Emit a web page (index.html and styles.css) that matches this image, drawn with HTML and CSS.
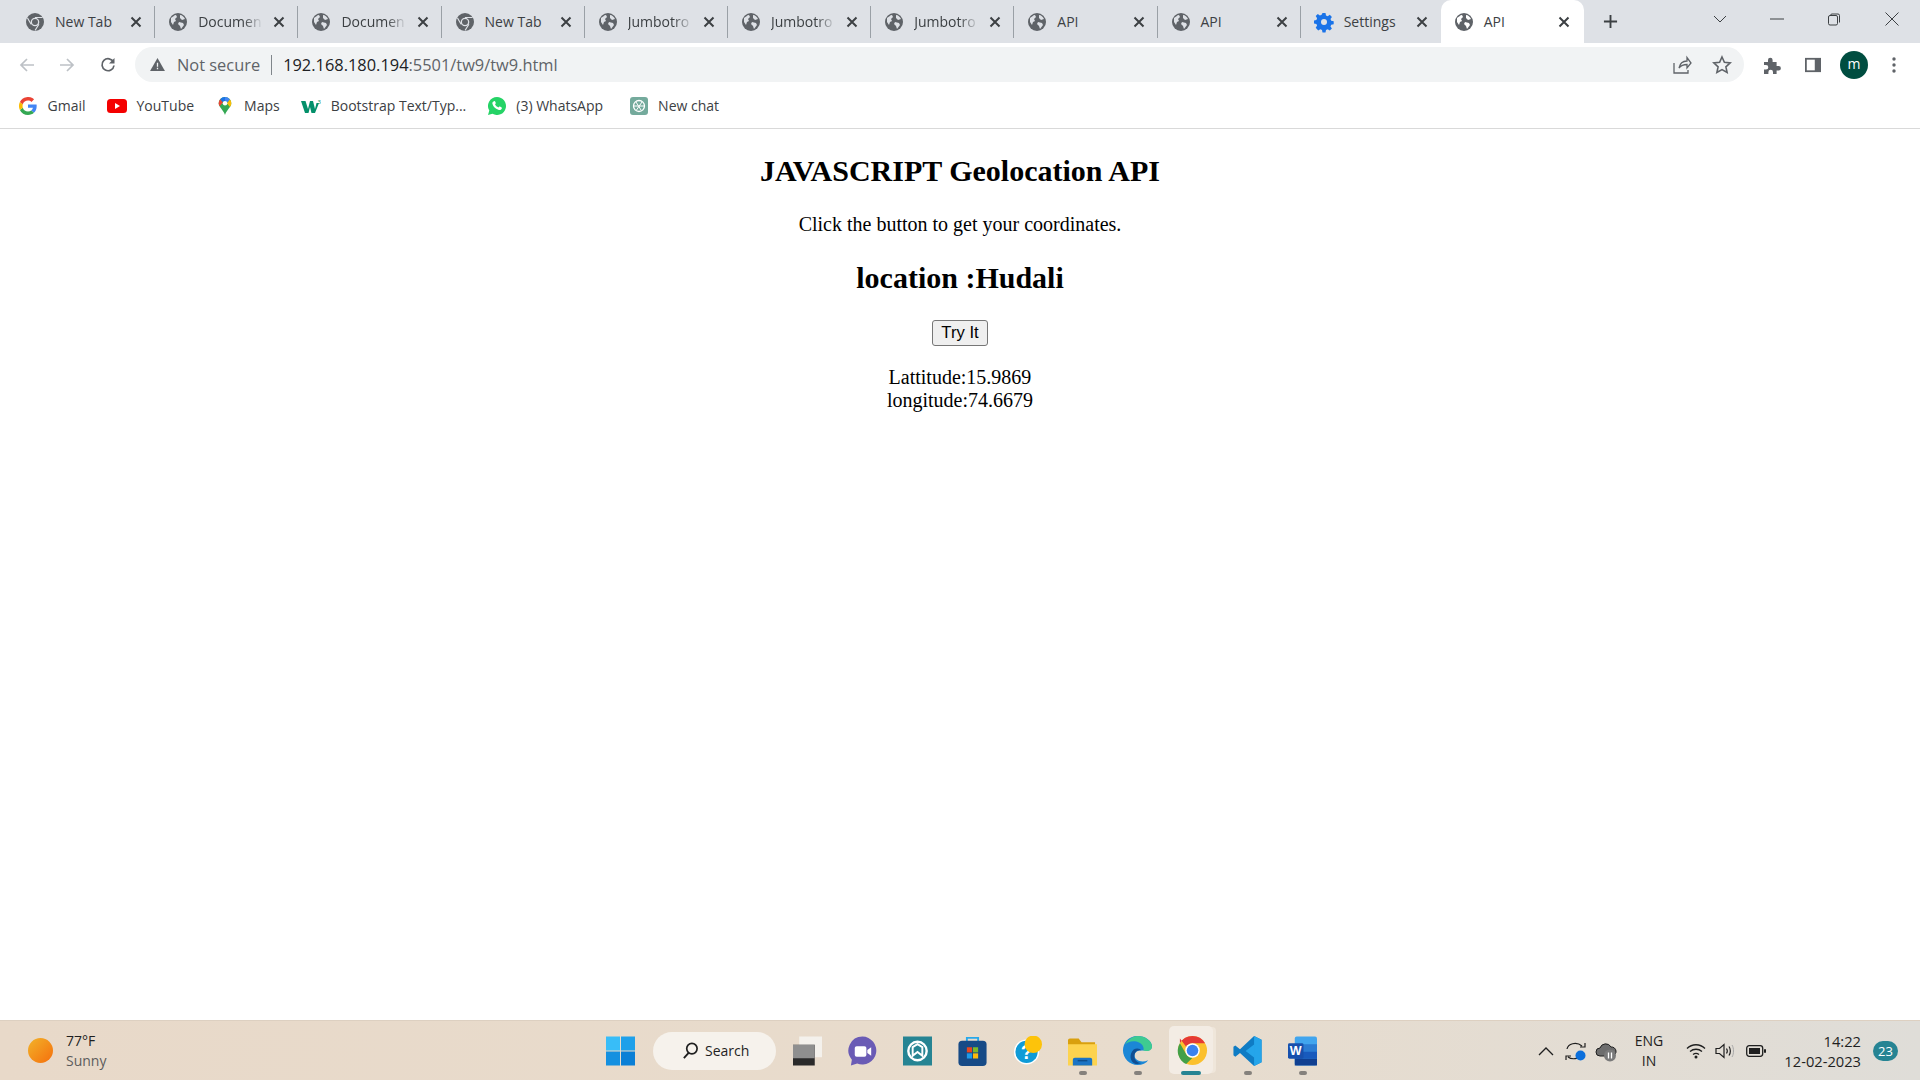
FILE: index.html
```html
<!DOCTYPE html>
<html lang="en">
<head>
  <meta charset="UTF-8" />
  <title>API</title>
  <link rel="stylesheet" href="styles.css">
</head>
<body>
  <svg class="sprites">
    <symbol id="globe" viewBox="0 0 18 18">
      <circle cx="9" cy="9" r="9" fill="#5f6368"/>
      <path d="M2 5c2-1 3-3 5-3l1 2-2 2 1 2-2 1-1 3-2-3zM11 2c2 0 4 2 5 4l-3 1-2-2zM10 9l4 1 1 2-3 4-1-3-2-2z" fill="#dee1e6"/>
    </symbol>
    <symbol id="globe-light" viewBox="0 0 18 18">
      <circle cx="9" cy="9" r="9" fill="#5f6368"/>
      <path d="M2 5c2-1 3-3 5-3l1 2-2 2 1 2-2 1-1 3-2-3zM11 2c2 0 4 2 5 4l-3 1-2-2zM10 9l4 1 1 2-3 4-1-3-2-2z" fill="#fff"/>
    </symbol>
    <symbol id="chrome-mono" viewBox="0 0 18 18">
      <circle cx="9" cy="9" r="9" fill="#5f6368"/>
      <path d="M9 4.500h7.500M5.100 11.200 1.500 5M12.900 11.200 9 17.500" stroke="#dee1e6" stroke-width="1.200"/>
      <circle cx="9" cy="9" r="4.300" fill="#dee1e6"/>
      <circle cx="9" cy="9" r="3" fill="#5f6368"/>
    </symbol>
    <symbol id="close" viewBox="0 0 16 16">
      <path d="M3.500 3.500l9 9M12.500 3.500l-9 9" stroke="#3c4043" stroke-width="2" fill="none"/>
    </symbol>
    <symbol id="colour-chrome" viewBox="0 0 32 32">
      <circle cx="16" cy="16" r="15" fill="#fbc02d"/>
      <path d="M16 1a15 15 0 0 1 13 7.500H16a7.500 7.500 0 0 0-6.500 3.750L3 3.500 3 8.500A15 15 0 0 1 16 1z" fill="#e53935"/>
      <path d="M3 8.500l6.500 11.250a7.500 7.500 0 0 0 6.500 3.750L9.500 30A15 15 0 0 1 3 8.500z" fill="#43a047"/>
      <circle cx="16" cy="16" r="7.500" fill="#fff"/>
      <circle cx="16" cy="16" r="6" fill="#3b82f0"/>
    </symbol>
  </svg>

  <header class="browser">
    <div class="tabstrip">
      <div class="tab"><svg class="favicon"><use href="#chrome-mono"/></svg><span class="tab-title">New Tab</span><svg class="tab-close"><use href="#close"/></svg></div>
      <div class="tab"><svg class="favicon"><use href="#globe"/></svg><span class="tab-title tab-fade">Documen</span><svg class="tab-close"><use href="#close"/></svg></div>
      <div class="tab"><svg class="favicon"><use href="#globe"/></svg><span class="tab-title tab-fade">Documen</span><svg class="tab-close"><use href="#close"/></svg></div>
      <div class="tab"><svg class="favicon"><use href="#chrome-mono"/></svg><span class="tab-title">New Tab</span><svg class="tab-close"><use href="#close"/></svg></div>
      <div class="tab"><svg class="favicon"><use href="#globe"/></svg><span class="tab-title tab-fade">Jumbotro</span><svg class="tab-close"><use href="#close"/></svg></div>
      <div class="tab"><svg class="favicon"><use href="#globe"/></svg><span class="tab-title tab-fade">Jumbotro</span><svg class="tab-close"><use href="#close"/></svg></div>
      <div class="tab"><svg class="favicon"><use href="#globe"/></svg><span class="tab-title tab-fade">Jumbotro</span><svg class="tab-close"><use href="#close"/></svg></div>
      <div class="tab"><svg class="favicon"><use href="#globe"/></svg><span class="tab-title">API</span><svg class="tab-close"><use href="#close"/></svg></div>
      <div class="tab"><svg class="favicon"><use href="#globe"/></svg><span class="tab-title">API</span><svg class="tab-close"><use href="#close"/></svg></div>
      <div class="tab tab-last">
        <svg class="favicon" viewBox="0 0 18 18"><path d="M7.500 0h3l.5 2.500 1.700.7 2.100-1.400 2.100 2.100-1.400 2.100.7 1.700 2.500.5v3l-2.500.5-.7 1.700 1.400 2.100-2.100 2.100-2.100-1.400-1.700.7-.5 2.500h-3l-.5-2.500-1.700-.7-2.100 1.400L.7 14.700l1.400-2.100-.7-1.700L-1 10.400v-3l2.400-.5.7-1.700L.7 3.100l2.100-2.100 2.100 1.400 1.700-.7z" fill="#1a73e8"/><circle cx="9" cy="9" r="3" fill="#dee1e6"/></svg>
        <span class="tab-title">Settings</span><svg class="tab-close"><use href="#close"/></svg>
      </div>
      <div class="tab tab-active"><svg class="favicon"><use href="#globe-light"/></svg><span class="tab-title">API</span><svg class="tab-close"><use href="#close"/></svg></div>
      <svg class="new-tab" viewBox="0 0 16 16"><path d="M8 1v14M1 8h14" stroke="#3c4043" stroke-width="2"/></svg>
      <div class="window-controls">
        <svg class="win-chevron" viewBox="0 0 14 8"><path d="M1 1l6 6 6-6" stroke="#3c4043" fill="none"/></svg>
        <svg class="win-min" viewBox="0 0 14 2"><path d="M0 1h14" stroke="#3c4043"/></svg>
        <svg class="win-restore" viewBox="0 0 14 14"><path d="M3.500 3.500a1.500 1.500 0 0 1 1.500-1.500h6a1.500 1.500 0 0 1 1.500 1.500v7M1.500 5a1.500 1.500 0 0 1 1.500-1.500h6a1.500 1.500 0 0 1 1.500 1.500v6.500a1.500 1.500 0 0 1-1.500 1.500h-6a1.500 1.500 0 0 1-1.500-1.500z" stroke="#3c4043" fill="#dee1e6"/></svg>
        <svg class="win-close" viewBox="0 0 14 14"><path d="M.5.500l13 13M13.500.500l-13 13" stroke="#3c4043" fill="none"/></svg>
      </div>
    </div>

    <div class="toolbar">
      <svg class="nav-icon" viewBox="0 0 16 16"><path d="M15 8H2M8 2 2 8l6 6" stroke="#bdc1c6" stroke-width="1.700" fill="none"/></svg>
      <svg class="nav-icon" viewBox="0 0 16 16"><path d="M1 8h13M8 2l6 6-6 6" stroke="#bdc1c6" stroke-width="1.700" fill="none"/></svg>
      <svg class="nav-icon" viewBox="0 0 16 16"><path d="M13.500 5.200A6 6 0 1 0 14 8.500" stroke="#5f6368" stroke-width="1.700" fill="none"/><path d="M14.500 1v5.500H9z" fill="#5f6368"/></svg>
      <div class="omnibox">
        <svg class="warn-icon" viewBox="0 0 16 14"><path d="M8 0l8 14H0z" fill="#5f6368"/><path d="M8 5v4.500M8 10.500v1.500" stroke="#f1f3f4" stroke-width="1.400"/></svg>
        <span class="not-secure">Not secure</span>
        <span class="omni-sep"></span>
        <span class="url"><span class="url-host">192.168.180.194</span>:5501/tw9/tw9.html</span>
        <svg class="omni-icon omni-share" viewBox="0 0 20 20"><path d="M2 8v10h14v-3M7 13c1-5 4-7 8-7V2.500l4 5.500-4 5V9.500c-3 0-6 1-8 3.500z" stroke="#5f6368" stroke-width="1.300" fill="none"/></svg>
        <svg class="omni-icon" viewBox="0 0 20 20"><path d="M10 2l2.400 5.300 5.800.6-4.300 3.900 1.200 5.700-5.100-2.900-5.100 2.900 1.200-5.700L1.800 7.900l5.800-.6z" stroke="#5f6368" stroke-width="1.600" fill="none"/></svg>
      </div>
      <svg class="bar-icon bar-puzzle" viewBox="0 0 18 18"><path d="M1 6h4V4a2.300 2.300 0 0 1 4.600 0v2h4v4h2a2.300 2.300 0 0 1 0 4.600h-2V18H10v-2a2.300 2.300 0 0 0-4.600 0v2H1v-4.500h2a2.300 2.300 0 0 0 0-4.600H1z" fill="#5f6368"/></svg>
      <svg class="bar-icon bar-panel" viewBox="0 0 18 18"><path d="M0 1h18v16H0z" fill="#5f6368"/><path d="M2 3h9v12H2z" fill="#fff"/></svg>
      <div class="avatar">m</div>
      <svg class="bar-icon bar-dots" viewBox="0 0 4 16"><circle cx="2" cy="2" r="1.700" fill="#5f6368"/><circle cx="2" cy="8" r="1.700" fill="#5f6368"/><circle cx="2" cy="14" r="1.700" fill="#5f6368"/></svg>
    </div>

    <div class="bookmarks">
      <div class="bookmark">
        <svg class="mark" viewBox="0 0 16 16"><path d="M15.700 8.200c0-.6 0-1.100-.1-1.600H8v3h4.400a3.700 3.700 0 0 1-1.600 2.500l2.500 2c1.500-1.400 2.400-3.400 2.400-5.900z" fill="#4285f4"/><path d="M8 16c2.200 0 4-.7 5.300-1.900l-2.500-2c-.7.500-1.600.8-2.800.8a4.900 4.900 0 0 1-4.600-3.400L.8 11.500A8 8 0 0 0 8 16z" fill="#34a853"/><path d="M3.400 9.500a4.800 4.800 0 0 1 0-3L.8 4.500a8 8 0 0 0 0 7z" fill="#fbbc05"/><path d="M8 3.200c1.200 0 2.300.4 3.100 1.200l2.300-2.300A8 8 0 0 0 .8 4.500l2.600 2A4.900 4.900 0 0 1 8 3.200z" fill="#ea4335"/></svg>
        Gmail
      </div>
      <div class="bookmark">
        <svg class="mark mark-wide" viewBox="0 0 20 14"><rect width="20" height="14" rx="3.500" fill="#f40000"/><path d="M8 4l5 3-5 3z" fill="#fff"/></svg>
        YouTube
      </div>
      <div class="bookmark">
        <svg class="mark" viewBox="0 0 16 20"><path d="M8 0a7 7 0 0 0-7 7c0 4.500 5 7 7 13 2-6 7-8.500 7-13a7 7 0 0 0-7-7z" fill="#34a853"/><path d="M8 0a7 7 0 0 1 5.500 2.700L10 7a2.500 2.500 0 0 0-2-2.500z" fill="#4285f4"/><path d="M2.600 2.500A7 7 0 0 1 8 0v4.500A2.500 2.500 0 0 0 5.700 6z" fill="#1a73e8"/><path d="M1 7a7 7 0 0 1 1.600-4.500L5.700 6 2 10.200A7 7 0 0 1 1 7z" fill="#ea4335"/><path d="M13.500 2.700A7 7 0 0 1 15 7c0 1.500-.6 2.800-1.500 4L10 7z" fill="#fbbc05"/><circle cx="8" cy="7" r="2.500" fill="#fff"/></svg>
        Maps
      </div>
      <div class="bookmark">
        <svg class="mark mark-wide" viewBox="0 0 20 14"><path d="M0 2h4.500l2.500 8 2-8h3l2 8 1.500-6 2.500 0L14 14h-3.500L9 8l-1.500 6H4z" fill="#04906a"/><text x="16.500" y="5" class="mark-sup">3</text></svg>
        Bootstrap Text/Typ...
      </div>
      <div class="bookmark">
        <svg class="mark" viewBox="0 0 18 18"><path d="M9 0a9 9 0 0 0-7.700 13.600L0 18l4.500-1.200A9 9 0 1 0 9 0z" fill="#25d366"/><path d="M5.500 4.500c1-1 1.500-.5 2 .7.400.8.400 1 0 1.500l-.5.600c.7 1.500 1.800 2.500 3.400 3.200l.7-.8c.4-.4.700-.4 1.300 0 1.500.8 1.800 1 1.300 2-.6 1.200-2 1.500-3.400 1-3-1-5-3-5.800-5.700-.3-1-.2-1.800 1-2.500z" fill="#fff"/></svg>
        (3) WhatsApp
      </div>
      <div class="bookmark bookmark-last">
        <svg class="mark" viewBox="0 0 18 18"><rect width="18" height="18" rx="3" fill="#74aa9c"/><circle cx="9" cy="9" r="5.500" stroke="#fff" stroke-width="1.300" fill="none"/><path d="M6 5l5 8M12 5 6.500 13M4 9h10" stroke="#fff"/></svg>
        New chat
      </div>
    </div>
  </header>

  <main class="page">
    <h2>JAVASCRIPT Geolocation API</h2>
    <p>Click the button to get your coordinates.</p>
    <h2>location :Hudali</h2>
    <button type="button">Try It</button>
    <p class="coords">Lattitude:15.9869<br>longitude:74.6679</p>
  </main>

  <footer class="taskbar">
    <div class="weather">
      <div class="sun"></div>
      <div class="weather-text">
        <div>77°F</div>
        <div class="weather-sub">Sunny</div>
      </div>
    </div>

    <div class="task-apps">
      <div class="task-slot">
        <svg class="app-icon" viewBox="0 0 29 29"><rect width="14" height="14" fill="#38bdf8"/><rect x="15" width="14" height="14" fill="#1ea0ea"/><rect y="15" width="14" height="14" fill="#1490e0"/><rect x="15" y="15" width="14" height="14" fill="#0a7fd6"/></svg>
      </div>
      <div class="search-pill">
        <svg class="search-icon" viewBox="0 0 18 18"><circle cx="10.500" cy="7" r="5.500" stroke="#1f1f1f" stroke-width="1.800" fill="none"/><path d="M7 11.500 2 17" stroke="#1f1f1f" stroke-width="2"/></svg>
        Search
      </div>
      <div class="task-slot">
        <svg class="app-icon" viewBox="0 0 28 28"><rect x="6" y="0" width="22" height="20" fill="#f4f1ec"/><rect x="0" y="8" width="21" height="20" fill="#2a2a2a"/><rect x="0" y="8" width="21" height="13" fill="#8f8f8f"/></svg>
      </div>
      <div class="task-slot">
        <svg class="app-icon" viewBox="0 0 30 30"><path d="M15 0a14.500 14.500 0 1 1-5.500 28L3 30l1-6A14.500 14.500 0 0 1 15 0z" fill="#6a5bb5"/><rect x="7" y="10" width="12" height="11" rx="2" fill="#fff"/><path d="M20 14l4-3v9l-4-3z" fill="#fff"/></svg>
      </div>
      <div class="task-slot">
        <svg class="app-icon" viewBox="0 0 30 30"><rect width="30" height="30" fill="#268493"/><circle cx="15" cy="15" r="9.500" stroke="#fff" stroke-width="2.500" fill="none"/><path d="M10 20V11l5-3 5 3v9l-5-4z" stroke="#fff" stroke-width="2" fill="none"/></svg>
      </div>
      <div class="task-slot">
        <svg class="app-icon" viewBox="0 0 30 32"><path d="M9 6V2h12v4" stroke="#28a8ea" stroke-width="2" fill="none"/><rect y="5" width="30" height="27" rx="4" fill="#164a86"/><rect x="9" y="12" width="5.500" height="5.500" fill="#e8461f"/><rect x="15.500" y="12" width="5.500" height="5.500" fill="#7cb928"/><rect x="9" y="18.500" width="5.500" height="5.500" fill="#1d9be9"/><rect x="15.500" y="18.500" width="5.500" height="5.500" fill="#fbb90a"/></svg>
      </div>
      <div class="task-slot">
        <svg class="app-icon" viewBox="0 0 30 30"><circle cx="14" cy="16" r="13" fill="#fff"/><circle cx="14" cy="16" r="11.500" fill="#0f9bd7"/><text x="14" y="23" class="help-mark">?</text><circle cx="21" cy="8" r="9" fill="#fdc30a"/></svg>
      </div>
      <div class="task-slot task-open">
        <svg class="app-icon" viewBox="0 0 30 30"><path d="M0 4a2 2 0 0 1 2-2h9l3 4h14v22H0z" fill="#d9a00e"/><path d="M0 8h30v22H0z" fill="#fdd34e"/><path d="M5 30v-6a2 2 0 0 1 2-2h16a2 2 0 0 1 2 2v6z" fill="#1b74c4"/><path d="M10 25h10" stroke="#0f4e8c" stroke-width="1.500"/></svg>
      </div>
      <div class="task-slot task-open">
        <svg class="app-icon app-large" viewBox="0 0 32 32"><path d="M16 1C7 1 1 8 1 16c0 8 7 15 15 15 5 0 9-2 11-5-6 3-14 1-14-5 0-3 3-5 6-5 5 0 11 1 12-4C31 6 24 1 16 1z" fill="#1b87d6"/><path d="M3 10C6 4 12 1 16 1c8 0 15 5 15 11 0 5-7 5-9 4 1-2 0-6-4-8-6-3-12-1-15 2z" fill="#3ecb91"/><path d="M14 30C8 28 7 20 12 15c3-2 7-1 8 1-5-1-8 3-7 8 1 3 4 5 7 5-2 1-4 1-6 1z" fill="#114e92"/></svg>
      </div>
      <div class="task-slot task-active">
        <svg class="app-icon app-large"><use href="#colour-chrome"/></svg>
      </div>
      <div class="task-slot task-open">
        <svg class="app-icon" viewBox="0 0 30 32"><path d="M22 0l8 4v24l-8 4L7 18l-5 4-2-1.500V11.500L2 10l5 4z" fill="#0f7cc4"/><path d="M22 0l8 4v24l-8 4zM22 9l-9 7 9 7z" fill="#25a5ea" fill-rule="evenodd"/></svg>
      </div>
      <div class="task-slot task-open">
        <svg class="app-icon" viewBox="0 0 30 30"><rect x="7" width="23" height="30" rx="2" fill="#41a5ee"/><rect x="7" y="8" width="23" height="7.500" fill="#2b7cd3"/><rect x="7" y="15.500" width="23" height="7.500" fill="#185abd"/><rect x="7" y="23" width="23" height="7" fill="#103f91"/><rect y="7" width="16" height="16" rx="1.500" fill="#1750ad"/><text x="8" y="19" class="word-mark">W</text></svg>
      </div>
    </div>

    <div class="tray">
      <svg class="tray-icon tray-chevron" viewBox="0 0 16 10"><path d="M1 9l7-7 7 7" stroke="#1f1f1f" stroke-width="1.300" fill="none"/></svg>
      <svg class="tray-icon tray-sync" viewBox="0 0 22 22"><path d="M2 9c1-5 9-8 15-3M20 3v4h-5M16 15c-2 4-9 5-13 2M1 20v-4h5" stroke="#1f1f1f" stroke-width="1.200" fill="none"/><circle cx="15.500" cy="15.500" r="5" fill="#0b6fdc"/></svg>
      <svg class="tray-icon tray-cloud" viewBox="0 0 22 22"><path d="M5 16a4 4 0 0 1 0-8 6 6 0 0 1 11-1 4.500 4.500 0 0 1 1 9z" fill="#6d6d6d" stroke="#1f1f1f"/><circle cx="15" cy="15.500" r="6" fill="#7a7a7a"/><path d="M13.500 12.500v6M16.500 12.500v6" stroke="#fff" stroke-width="1.300"/></svg>
      <div class="lang">ENG<br>IN</div>
      <svg class="tray-icon tray-wifi" viewBox="0 0 20 16"><path d="M1 5.500c5-5 13-5 18 0M4 8.500c3.500-3 8.500-3 12 0M7 11.500c2-1.500 4-1.500 6 0" stroke="#1f1f1f" stroke-width="1.300" fill="none"/><circle cx="10" cy="14" r="1.500" fill="#1f1f1f"/></svg>
      <svg class="tray-icon tray-sound" viewBox="0 0 20 16"><path d="M1 5.500h3.500L9 1.500v13l-4.500-4H1z" stroke="#1f1f1f" stroke-width="1.200" fill="none"/><path d="M11.500 5.500c1 1.500 1 3.500 0 5M14 3.500c1.800 2.500 1.800 6.500 0 9" stroke="#1f1f1f" stroke-width="1.200" fill="none"/><path d="M17 2c2 3 2 9 0 12" stroke="#a8a8a8" fill="none"/></svg>
      <svg class="tray-icon tray-battery" viewBox="0 0 20 12"><rect x=".7" y=".7" width="16" height="10.600" rx="2.500" stroke="#1f1f1f" stroke-width="1.300" fill="none"/><rect x="3" y="3" width="11" height="6" fill="#1f1f1f"/><rect x="18" y="4" width="2" height="4" rx="1" fill="#1f1f1f"/></svg>
      <div class="clock">14:22<br>12-02-2023</div>
      <div class="notif">23</div>
    </div>
  </footer>
</body>
</html>
```

FILE: styles.css
```css
* {
  box-sizing: border-box;
}

html,
body {
  height: 100%;
}

body {
  margin: 0;
  display: flex;
  flex-direction: column;
  height: 1080px;
  overflow: hidden;
  background: #fff;
  color: #000;
  font-family: 'Liberation Serif', serif;
}

.sprites {
  display: none;
}

/* Browser frame */
.browser {
  font-family: 'Open Sans', sans-serif;
  color: #3c4043;
  border-bottom: 1px solid #d9d9d9;
}

.tabstrip {
  display: flex;
  align-items: center;
  height: 43px;
  padding-left: 12px;
  background: #dee1e6;
}

.tab {
  display: flex;
  align-items: center;
  flex: none;
  width: 143.2px;
  height: 32px;
  padding: 0 10px 0 14px;
  border-right: 1px solid #9aa0a6;
  font-size: 14px;
}

.tab-last {
  width: 140px;
  padding-right: 11px;
  border-right: none;
}

.tab-active {
  width: 143px;
  height: 43px;
  padding-right: 12px;
  background: #fff;
  border: none;
  border-radius: 10px 10px 0 0;
}

.favicon {
  flex: none;
  width: 18px;
  height: 18px;
  overflow: visible;
}

.tab-title {
  flex: 1;
  min-width: 0;
  margin: 0 8px 0 11px;
  white-space: nowrap;
}

/* long titles fade out before the close button */
.tab-fade {
  -webkit-mask-image: linear-gradient(to right, #000 70%, transparent 100%);
  mask-image: linear-gradient(to right, #000 70%, transparent 100%);
}

.tab-close {
  flex: none;
  width: 16px;
  height: 16px;
}

.new-tab {
  flex: none;
  width: 15px;
  height: 15px;
  margin-left: 19px;
}

.window-controls {
  display: flex;
  align-items: center;
  margin-left: 95px;
  margin-bottom: 5px;
}

.win-chevron {
  width: 14px;
  height: 8px;
}

.win-min {
  width: 14px;
  height: 2px;
  margin-left: 43px;
}

.win-restore {
  width: 14px;
  height: 14px;
  margin-left: 43px;
}

.win-close {
  width: 14px;
  height: 14px;
  margin-left: 44px;
}

.toolbar {
  display: flex;
  align-items: center;
  height: 43px;
  padding: 0 0 0 19px;
  background: #fff;
}

.nav-icon {
  flex: none;
  width: 16px;
  height: 16px;
  margin-right: 24px;
}

.nav-icon:nth-child(2) {
  margin-right: 25px;
}

.nav-icon:nth-child(3) {
  margin-right: 19px;
}

.omnibox {
  display: flex;
  align-items: center;
  flex: none;
  width: 1609px;
  height: 35px;
  padding: 0 12px 0 15px;
  background: #f1f3f4;
  border-radius: 18px;
  font-size: 16.4px;
  color: #5f6368;
}

.warn-icon {
  flex: none;
  width: 15px;
  height: 13px;
}

.not-secure {
  margin-left: 12px;
}

.omni-sep {
  width: 1px;
  height: 20px;
  margin: 0 11px;
  background: #80868b;
}

.url {
  flex: 1;
}

.url-host {
  color: #202124;
}

.omni-icon {
  flex: none;
  width: 20px;
  height: 20px;
  margin-left: 20px;
}

.omni-share {
  margin-left: 0;
}

.bar-icon {
  flex: none;
}

.bar-puzzle {
  width: 18px;
  height: 18px;
  margin-left: 19px;
}

.bar-panel {
  width: 18px;
  height: 16px;
  margin-left: 23px;
}

.avatar {
  flex: none;
  display: flex;
  align-items: center;
  justify-content: center;
  width: 28px;
  height: 28px;
  margin-left: 18px;
  padding-bottom: 3px;
  border-radius: 50%;
  background: #004d40;
  color: #fff;
  font-size: 14px;
}

.bar-dots {
  width: 4px;
  height: 16px;
  margin-left: 24px;
}

.bookmarks {
  display: flex;
  align-items: center;
  height: 42px;
  padding: 0 0 3px 19px;
  gap: 21.5px;
  background: #fff;
  font-size: 14px;
}

.bookmark {
  display: flex;
  align-items: center;
  gap: 10.5px;
  white-space: nowrap;
}

.bookmark-last {
  margin-left: 5px;
}

.mark {
  flex: none;
  width: 18px;
  height: 18px;
}

.mark-wide {
  width: 20px;
  height: 14px;
  margin-right: -1px;
}

.mark-sup {
  font-family: 'Open Sans', sans-serif;
  font-size: 6px;
  fill: #04906a;
}

/* Page content */
.page {
  flex: 1;
  text-align: center;
  font-size: 20px;
}

.page h2 {
  margin: 25px 0;
  font-size: 30px;
  line-height: 34px;
}

.page p {
  margin: 25px 0;
  line-height: 23px;
}

.page button {
  display: block;
  width: 56px;
  height: 26px;
  margin: 0 auto;
  padding: 0;
  background: #efefef;
  border: 1px solid #767676;
  border-radius: 3px;
  font-family: 'Liberation Sans', sans-serif;
  font-size: 16.67px;
  color: #000;
}

.page .coords {
  margin-top: 20px;
}

/* Windows taskbar */
.taskbar {
  position: relative;
  display: flex;
  align-items: center;
  flex: none;
  height: 60px;
  padding-left: 28px;
  background: linear-gradient(to right, #e8d9c9, #e8dccd 60%, #dfddd8);
  border-top: 1px solid #ddd0c1;
  font-family: 'Open Sans', sans-serif;
  color: #1f1f1f;
  font-size: 14px;
}

.weather {
  display: flex;
  align-items: center;
  gap: 13px;
  width: 565px;
}

.sun {
  width: 25px;
  height: 25px;
  border-radius: 50%;
  background: linear-gradient(135deg, #f2b32a, #f56f0c);
}

.weather-text {
  line-height: 20px;
}

.weather-sub {
  color: #5c5c5c;
}

.task-apps {
  display: flex;
  align-items: center;
  height: 100%;
}

.task-slot {
  position: relative;
  display: flex;
  align-items: center;
  justify-content: center;
  flex: none;
  width: 55px;
  height: 100%;
}

.app-icon {
  width: 29px;
  height: 30px;
}

.app-large {
  width: 31px;
  height: 31px;
}

.task-open::after,
.task-active::after {
  content: '';
  position: absolute;
  left: 50%;
  bottom: 5px;
  width: 8px;
  height: 4px;
  margin-left: -4px;
  border-radius: 2px;
  background: #85817c;
}

.task-active::before {
  content: '';
  position: absolute;
  top: 5px;
  left: 4px;
  width: 44px;
  height: 48px;
  border-radius: 5px;
  background: #f3ece4;
  box-shadow: 4px 0 0 -1px #efe6da;
}

.task-active .app-icon {
  position: relative;
}

.task-active::after {
  width: 20px;
  margin-left: -12px;
  background: #268493;
}

.search-pill {
  display: flex;
  align-items: center;
  flex: none;
  width: 123px;
  height: 38px;
  margin-left: 5px;
  margin-right: 4px;
  padding-left: 29px;
  gap: 6px;
  border-radius: 19px;
  background: #f6f2ec;
}

.search-icon {
  width: 17px;
  height: 17px;
}

.help-mark {
  font-family: 'Liberation Sans', sans-serif;
  font-weight: 700;
  font-size: 20px;
  fill: #fff;
  text-anchor: middle;
}

.word-mark {
  font-family: 'Liberation Sans', sans-serif;
  font-weight: 700;
  font-size: 13px;
  fill: #fff;
  text-anchor: middle;
}

.tray {
  display: flex;
  align-items: center;
  position: absolute;
  top: 0;
  right: 22px;
  height: 100%;
}

.tray-icon {
  flex: none;
}

.tray-chevron {
  width: 16px;
  height: 10px;
}

.tray-sync {
  width: 22px;
  height: 22px;
  margin-left: 11px;
}

.tray-cloud {
  width: 22px;
  height: 22px;
  margin-left: 8px;
}

.lang {
  width: 40px;
  margin-left: 12px;
  text-align: center;
  line-height: 20px;
}

.tray-wifi {
  width: 20px;
  height: 16px;
  margin-left: 17px;
}

.tray-sound {
  width: 20px;
  height: 16px;
  margin-left: 9px;
}

.tray-battery {
  width: 20px;
  height: 12px;
  margin-left: 11px;
}

.clock {
  width: 95px;
  text-align: right;
  line-height: 20px;
  font-size: 14.7px;
}

.notif {
  display: flex;
  align-items: center;
  justify-content: center;
  width: 25px;
  height: 20px;
  margin-left: 12px;
  border-radius: 10px;
  background: #268493;
  color: #fff;
  font-size: 13px;
}
```
